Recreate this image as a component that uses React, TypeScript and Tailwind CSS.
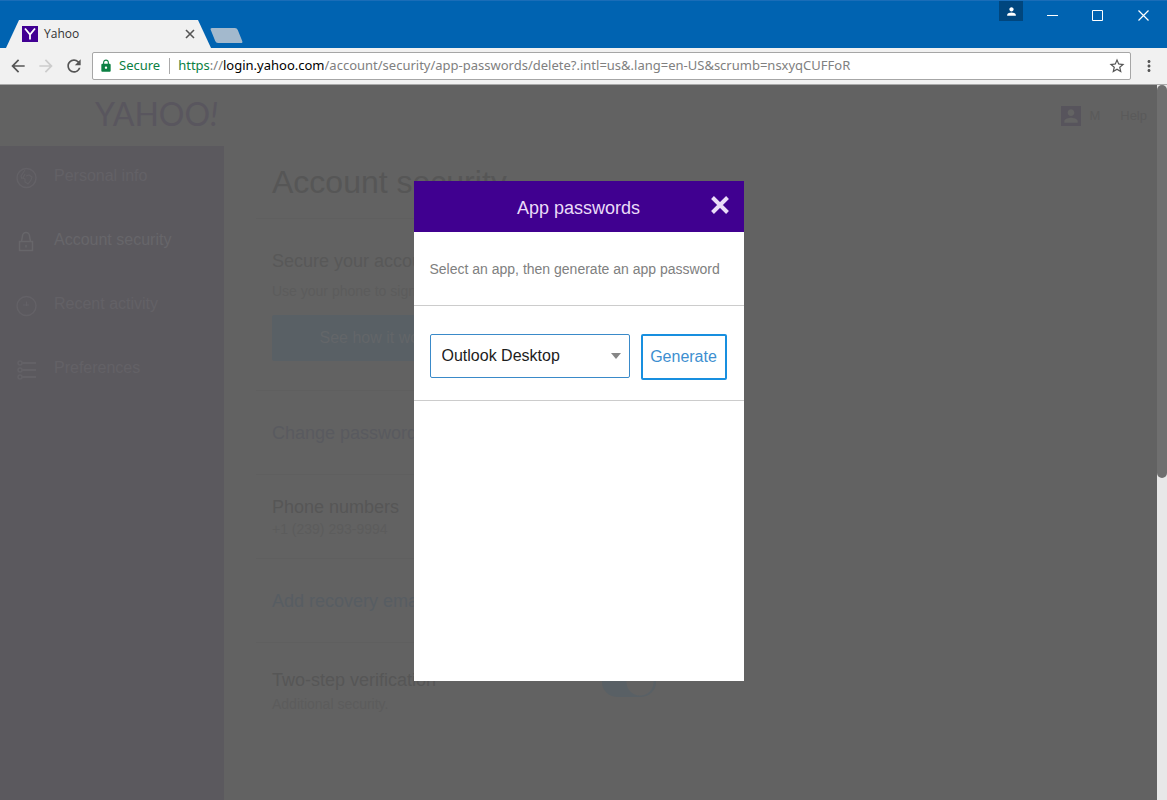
import { useState } from 'react';
import { MdPerson, MdArrowBack, MdArrowForward, MdRefresh, MdLock, MdStarBorder, MdMoreVert } from 'react-icons/md';

const navItems = [
  { id: 'personal', label: 'Personal info' },
  { id: 'security', label: 'Account security' },
  { id: 'activity', label: 'Recent activity' },
  { id: 'preferences', label: 'Preferences' },
];

function NavIcon({ id }: { id: string }) {
  return (
    <svg viewBox="0 0 22 22" fill="none" stroke="currentColor" strokeWidth="1.5" className="mt-px size-[22px] shrink-0">
      {id === 'personal' && (
        <>
          <circle cx="10.500" cy="11" r="9.500" />
          <path d="M9 3L5 9l1 3M9 7l-2 4 2 1v3l3 2 3-4 1-3-3-2-3 1" strokeWidth="1.200" />
        </>
      )}
      {id === 'security' && (
        <>
          <path d="M3.500 10.500h13v9h-13zM10 14v2.500" />
          <path d="M5.500 10.500L6.500 5a3.500 3.500 0 0 1 7 0l1 5.500" />
        </>
      )}
      {id === 'activity' && (
        <>
          <circle cx="10.500" cy="11" r="9.500" />
          <path d="M10.500 6.500V11M7 10h6" strokeWidth="1.200" />
        </>
      )}
      {id === 'preferences' && (
        <>
          <path d="M6 4h14M6 11h14M6 18h14" strokeWidth="2" />
          <circle cx="4" cy="4" r="2" />
          <circle cx="4" cy="11" r="2" />
          <circle cx="4" cy="18" r="2" />
        </>
      )}
    </svg>
  );
}

function TitleBar() {
  return (
    <div className="flex h-12 shrink-0 items-end justify-between border-t border-[#1a6db8] bg-[#0063b1]">
      <div className="flex items-end pl-[6px]">
        <div className="flex h-7 w-[205px] items-center bg-[#f1f1f1] px-4 [clip-path:polygon(13px_0,calc(100%-13px)_0,100%_100%,0_100%)]">
          <svg viewBox="0 0 16 16" className="size-4">
            <path d="M0 0h16v16H0z" fill="#410093" />
            <path d="M3 2.500l5 6 5-6M8 8.500v5" stroke="#fff" strokeWidth="1.800" fill="none" />
          </svg>
          <span className="ml-[6px] flex-1 text-xs text-[#333]">Yahoo</span>
          <button type="button" aria-label="Close tab" className="text-[#555]">
            <svg viewBox="0 0 10 10" className="size-[10px]" stroke="currentColor" strokeWidth="1.600">
              <path d="M1 1l8 8M9 1l-8 8" />
            </svg>
          </button>
        </div>
        <button type="button" aria-label="New tab" className="mb-[5px] ml-[2px] h-[15px] w-[27px] skew-x-[22deg] rounded-xs bg-[#a3b9cd]" />
      </div>
      <div className="flex items-start self-stretch text-white">
        <button type="button" aria-label="Profile" className="mr-[7px] flex h-5 w-6 items-center justify-center bg-[#00467e]">
          <MdPerson className="size-[13px]" />
        </button>
        <button type="button" aria-label="Minimize" className="flex h-7 w-[45px] items-center justify-center">
          <svg viewBox="0 0 11 11" className="size-[11px]" stroke="currentColor">
            <path d="M0 5.500h11" />
          </svg>
        </button>
        <button type="button" aria-label="Maximize" className="flex h-7 w-[45px] items-center justify-center">
          <svg viewBox="0 0 11 11" className="size-[11px]" stroke="currentColor" fill="none">
            <path d="M.5.5h10v10H.5z" />
          </svg>
        </button>
        <button type="button" aria-label="Close" className="flex h-7 w-[47px] items-center justify-center">
          <svg viewBox="0 0 11 11" className="size-[11px]" stroke="currentColor" strokeWidth="1.200">
            <path d="M.5.5l10 10M10.500.5l-10 10" />
          </svg>
        </button>
      </div>
    </div>
  );
}

function Toolbar() {
  const [path, setPath] = useState('/account/security/app-passwords/delete?.intl=us&.lang=en-US&scrumb=nsxyqCUFFoR');

  return (
    <div className="flex h-[37px] shrink-0 items-center border-b border-[#a9a9a9] bg-[#f1f1f1] pl-2 font-['Noto_Sans',sans-serif] text-[13px] text-[#555]">
      <button type="button" aria-label="Back">
        <MdArrowBack className="size-5" />
      </button>
      <button type="button" aria-label="Forward" className="ml-2 text-[#ccc]">
        <MdArrowForward className="size-5" />
      </button>
      <button type="button" aria-label="Reload" className="ml-2">
        <MdRefresh className="size-5" />
      </button>
      <div className="ml-2 flex h-7 min-w-0 flex-1 items-center rounded-xs border border-[#a6a6a6] bg-white pr-1 pl-[6px]">
        <MdLock className="size-[14px] text-[#0b8043]" />
        <span className="ml-[6px] text-[#0b8043]">Secure</span>
        <span className="mr-2 ml-[9px] h-4 w-px bg-[#aaa]" />
        <span className="text-[#0b8043]">https</span>
        <span className="text-[#808080]">://</span>
        <label htmlFor="path" className="text-black">login.yahoo.com</label>
        <input
          id="path"
          value={path}
          onChange={(e) => setPath(e.target.value)}
          className="min-w-0 flex-1 text-[#808080] outline-none"
        />
        <button type="button" aria-label="Bookmark this page">
          <MdStarBorder className="size-[18px]" />
        </button>
      </div>
      <button type="button" aria-label="Menu" className="mx-[9px]">
        <MdMoreVert className="size-[18px]" />
      </button>
    </div>
  );
}

function AccountPage() {
  return (
    <div className="flex min-w-0 flex-1 flex-col bg-[#626262] text-[#565656]">
      <header className="flex h-[61px] shrink-0 items-center justify-between pr-[10px] pl-[95px]">
        <a href="#home" className="mb-1 flex items-center font-[Lato] text-[32px] leading-9 text-[#59565e]">
          YAHOO<i>!</i>
        </a>
        <div className="flex items-center text-[13px]">
          <span className="flex size-5 items-center justify-center bg-[#57545c] text-[#636363]">
            <MdPerson className="size-5" />
          </span>
          <span className="ml-2 text-[#5a5a5a]">M</span>
          <a href="#help" className="ml-5 text-[#5a5a5a]">Help</a>
        </div>
      </header>
      <div className="flex min-h-0 flex-1">
        <nav className="w-56 shrink-0 bg-[#5b595e]">
          {navItems.map((item) => (
            <a
              key={item.id}
              href={`#${item.id}`}
              className={`flex h-16 gap-4 px-4 pt-5 text-base leading-5 ${item.id === 'security' ? 'text-[#67666a]' : 'text-[#636166]'}`}
            >
              <NavIcon id={item.id} />
              <span>{item.label}</span>
            </a>
          ))}
        </nav>
        <main className="min-w-0 flex-1 pl-8">
          <div className="max-w-[416px] divide-y divide-[#5f5f5f]">
            <h1 className="h-[73px] px-4 pt-4 text-[32px] leading-10">Account security</h1>
            <section className="h-[172px] px-4 pt-8">
              <h2 className="text-lg leading-5 text-[#585858]">Secure your account</h2>
              <p className="mt-2 text-sm leading-6 text-[#5c5c5c]">Use your phone to sign in</p>
              <button type="button" className="mt-3 h-[46px] w-[216px] rounded-xs bg-[#596065] text-base text-[#636669]">
                See how it works
              </button>
            </section>
            <div className="flex h-[84px] items-center px-4">
              <a href="#password" className="text-lg text-[#595a5f]">Change password</a>
            </div>
            <div className="flex h-[84px] flex-col justify-center px-4">
              <h2 className="text-lg leading-6">Phone numbers</h2>
              <p className="text-sm leading-5 text-[#5c5c5c]">+1 (239) 293-9994</p>
            </div>
            <div className="flex h-[84px] items-center px-4">
              <a href="#recovery" className="text-lg text-[#575d62]">Add recovery email</a>
            </div>
            <div className="flex h-[98px] items-center justify-between px-4">
              <div>
                <h2 className="text-lg leading-6">Two-step verification</h2>
                <p className="text-sm leading-6 text-[#5c5c5c]">Additional security.</p>
              </div>
              <input
                type="checkbox"
                defaultChecked
                aria-label="Two-step verification"
                className="mb-5 h-[30px] w-[54px] appearance-none rounded-full bg-[#596065] bg-[radial-gradient(circle_at_38px_15px,#626262_13px,transparent_14px)]"
              />
            </div>
          </div>
        </main>
      </div>
    </div>
  );
}

function AppPasswordDialog() {
  const [app, setApp] = useState('Outlook Desktop');

  return (
    <div role="dialog" aria-labelledby="dialog-title" className="h-[500px] w-[330px] bg-white">
      <div className="grid h-[51px] grid-cols-[1fr_auto_1fr] items-center bg-[#400090] px-[14px] text-[#eadcf8]">
        <h2 id="dialog-title" className="col-start-2 pt-[2px] text-lg leading-6">App passwords</h2>
        <button type="button" aria-label="Close dialog" className="mb-1 justify-self-end">
          <svg viewBox="0 0 20 20" className="size-5" stroke="currentColor" strokeWidth="4">
            <path d="M2.500 2.500l15 15M17.500 2.500l-15 15" />
          </svg>
        </button>
      </div>
      <p className="flex h-[74px] items-center border-b border-[#ccc] px-4 text-sm text-[#808080]">
        Select an app, then generate an app password
      </p>
      <div className="flex h-[95px] items-start justify-between border-b border-[#ccc] pt-7 pr-[17px] pl-4 text-base">
        <div className="relative">
          <select
            aria-label="Select an app"
            value={app}
            onChange={(e) => setApp(e.target.value)}
            className="h-11 w-[200px] appearance-none rounded-xs border border-[#3a8ac9] bg-white pl-[11px] text-[#1d1d1d]"
          >
            <option>Outlook Desktop</option>
            <option>Other app</option>
          </select>
          <svg viewBox="0 0 10 6" className="pointer-events-none absolute top-[19px] right-[9px] h-[6px] w-[10px]">
            <path d="M0 0h10L5 6z" fill="#868686" />
          </svg>
        </div>
        <button type="button" className="h-[46px] w-[86px] rounded-xs border-2 border-[#188fdf] text-[#3d8fd0]">
          Generate
        </button>
      </div>
    </div>
  );
}

export default function App() {
  return (
    <div className="flex h-screen flex-col overflow-hidden font-['Liberation_Sans',Arial,sans-serif]">
      <div className="shrink-0 font-['Open_Sans','Noto_Sans',sans-serif]">
        <TitleBar />
        <Toolbar />
      </div>
      <div className="relative flex min-h-0 flex-1">
        <AccountPage />
        {/* scrollbar */}
        <div className="w-[10px] shrink-0 bg-[#e8e8e8]">
          <div className="h-[55%] rounded-full bg-[#6f6f6f]" />
        </div>
        <div className="absolute inset-y-0 right-[10px] left-0 flex items-start justify-center pt-24">
          <AppPasswordDialog />
        </div>
      </div>
    </div>
  );
}
